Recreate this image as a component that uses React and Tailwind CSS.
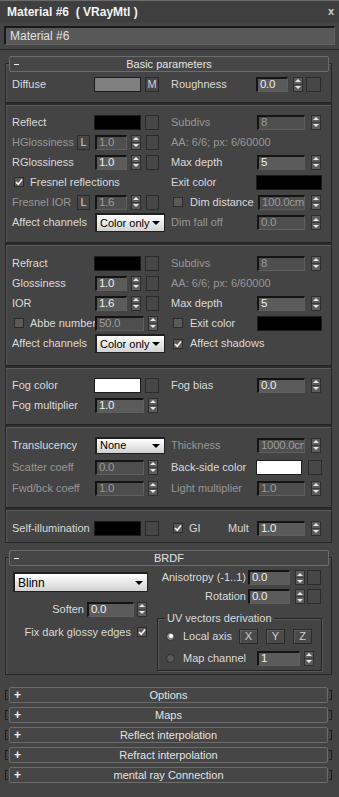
import React from 'react';

const Label = ({ children, dim, className = '' }) => (
    <div className={`shrink-0 whitespace-nowrap leading-none ${dim ? 'text-[#979797]' : 'text-[#dadada]'} ${className}`}>{children}</div>
);

const Swatch = ({ className = '' }) => (
    <div className={`h-[15px] shrink-0 border border-[#1c1c1c] ${className}`} />
);

const MapBox = ({ className = 'w-[14px]', children }) => (
    <div className={`h-[15px] shrink-0 flex items-center justify-center border border-[#2a2a2a] bg-[#474747] text-[#d0d0d0] leading-none ${className}`}>
        {children}
    </div>
);

const Field = ({ value, dim, className = '' }) => (
    <div
        className={`h-[15px] shrink-0 flex items-center pl-[2px] overflow-hidden whitespace-nowrap text-[11.5px] tracking-[-0.3px] leading-none border-t-2 border-l-2 border-b border-r border-t-[#141414] border-l-[#141414] border-b-[#5f5f5f] border-r-[#5f5f5f] ${dim ? 'bg-[#4e4e4e] text-[#9a9a9a]' : 'bg-[#5b5b5b] text-[#eeeeee]'} ${className}`}
    >
        {value}
    </div>
);

const Spinner = ({ className = '' }) => (
    <div className={`w-[10px] h-[15px] shrink-0 flex flex-col bg-[#5c5c5c] border border-[#2e2e2e] ${className}`}>
        <div className="flex-1 flex items-center justify-center border-b border-[#3a3a3a]">
            <div className="w-0 h-0 border-x-[3px] border-x-transparent border-b-[3px] border-b-[#e6e6e6]" />
        </div>
        <div className="flex-1 flex items-center justify-center">
            <div className="w-0 h-0 border-x-[3px] border-x-transparent border-t-[3px] border-t-[#e6e6e6]" />
        </div>
    </div>
);

const Check = ({ checked, className = '' }) => (
    <div className={`w-[10px] h-[10px] shrink-0 flex items-center justify-center bg-[#5a5a5a] border border-[#2c2c2c] ${className}`}>
        {checked && (
            <svg width="8" height="8" viewBox="0 0 8 8">
                <path d="M1 4 L3.2 6.3 L7 1.4" stroke="#f4f4f4" strokeWidth="1.7" fill="none" />
            </svg>
        )}
    </div>
);

const Radio = ({ on }) => (
    <div className={`w-[9px] h-[9px] shrink-0 rounded-full flex items-center justify-center border border-[#2e2e2e] ${on ? 'bg-[#8a8a8a]' : 'bg-[#5a5a5a]'}`}>
        {on && <div className="w-[4px] h-[4px] rounded-full bg-white" />}
    </div>
);

const Dropdown = ({ value, className = '' }) => (
    <div
        className={`shrink-0 flex items-center justify-between pl-[3px] pr-[4px] bg-linear-to-b from-white to-[#d2d2d2] border border-[#202020] border-t-2 border-l-2 text-black text-[11px] leading-none whitespace-nowrap overflow-hidden ${className}`}
    >
        <span className="whitespace-nowrap">{value}</span>
        <div className="shrink-0 w-0 h-0 border-x-[4px] border-x-transparent border-t-[4px] border-t-black" />
    </div>
);

const Btn = ({ children, className = '' }) => (
    <div className={`w-[19px] h-[15px] shrink-0 flex items-center justify-center border border-[#2a2a2a] bg-[#4a4a4a] text-[#cfcfcf] leading-none shadow-[inset_1px_1px_0_#5e5e5e] ${className}`}>
        {children}
    </div>
);

const Sep = ({ className = '' }) => (
    <div className={`h-[4px] border-t border-b border-t-[#232323] border-b-[#5c5c5c] bg-[#2c2c2c] ${className}`} />
);

const Row = ({ children, className = 'h-[20px]' }) => <div className={`flex items-center ${className}`}>{children}</div>;

const Left = ({ children }) => <div className="w-[159px] shrink-0 flex items-center">{children}</div>;

const OpenHeader = ({ title }) => (
    <div className="relative z-10 h-[16px] w-[320px] ml-[9px] flex items-center border border-[#6c6c6c] rounded-[2px] bg-[#464646] text-[#e4e4e4]">
        <div className="w-[14px] pl-[4px] flex items-center">
            <div className="w-[5px] h-[1px] bg-[#eeeeee]" />
        </div>
        <div className="flex-1 text-center pr-[14px] leading-none">{title}</div>
    </div>
);

const Collapsed = ({ title, first }) => (
    <div className={`flex items-center h-[16px] ${first ? 'mt-[12px]' : 'mt-[4px]'}`}>
        <div className="ml-[5px] w-[3px] h-[10px] border-l border-y border-[#1c1c1c]" />
        <div className="ml-[1px] w-[319px] h-[16px] flex items-center border border-[#6c6c6c] rounded-[2px] bg-[#464646] text-[#e4e4e4]">
            <div className="w-[14px] pl-[4px] font-bold text-[12px] leading-none text-[#f0f0f0]">+</div>
            <div className="flex-1 text-center pr-[14px] leading-none">{title}</div>
        </div>
        <div className="ml-[1px] w-[3px] h-[10px] border-r border-y border-[#1c1c1c]" />
    </div>
);

const frame = 'relative -mt-[9px] ml-[5px] w-[327px] border border-[#262626] shadow-[inset_1px_1px_0_#575757]';

export default function App() {
    return (
        <div className="w-[339px] h-[797px] overflow-hidden bg-[#444444] font-['Liberation_Sans',Arial,sans-serif] text-[11px]">
            {/* Title bar */}
            <div className="h-[22px] flex items-center justify-between pl-[7px] pr-[5px] border-t border-[#6a6a6a] bg-[#3f3f3f]">
                <span className="font-bold text-[12px] text-[#f2f2f2] whitespace-pre">Material #6  ( VRayMtl )</span>
                <span className="font-bold text-[11px] text-[#cfcfcf]">x</span>
            </div>

            {/* Name field */}
            <div className="mt-[4px] ml-[4px] w-[331px] h-[19px] flex items-center pl-[4px] text-[12px] text-[#e2e2e2] bg-[#585858] border-t-2 border-l-2 border-b border-r border-t-[#1a1a1a] border-l-[#1a1a1a] border-b-[#626262] border-r-[#626262]">
                Material #6
            </div>
            <div className="mt-[4px] border-t border-[#262626]" />

            <div className="pt-[6px]">
                {/* Basic parameters */}
                <OpenHeader title="Basic parameters" />
                <div className={frame}>
                    <div className="pl-[6px] pt-[10px]">
                        <Row>
                            <Left>
                                <Label className="w-[82px]">Diffuse</Label>
                                <Swatch className="w-[47px] bg-[#808080]" />
                                <MapBox className="w-[14px] ml-[4px]">M</MapBox>
                            </Left>
                            <Label className="w-[85px]">Roughness</Label>
                            <Field value="0.0" className="w-[32px]" />
                            <Spinner className="ml-[5px]" />
                            <MapBox className="w-[15px] ml-[3px]" />
                        </Row>
                    </div>
                    <Sep className="mt-[8px]" />

                    {/* Reflection */}
                    <div className="pl-[6px] pt-[6px]">
                        <Row>
                            <Left>
                                <Label className="w-[82px]">Reflect</Label>
                                <Swatch className="w-[47px] bg-black" />
                                <MapBox className="w-[14px] ml-[4px]" />
                            </Left>
                            <Label dim className="w-[86px]">Subdivs</Label>
                            <Field dim value="8" className="w-[48px]" />
                            <Spinner className="ml-[6px]" />
                        </Row>
                        <Row>
                            <Left>
                                <Label dim className="w-[65px]">HGlossiness</Label>
                                <MapBox className="w-[13px]">L</MapBox>
                                <Field dim value="1.0" className="w-[32px] ml-[5px]" />
                                <Spinner className="ml-[4px]" />
                                <MapBox className="w-[13px] ml-[5px]" />
                            </Left>
                            <Label dim>AA: 6/6; px: 6/60000</Label>
                        </Row>
                        <Row>
                            <Left>
                                <Label className="w-[83px]">RGlossiness</Label>
                                <Field value="1.0" className="w-[32px]" />
                                <Spinner className="ml-[4px]" />
                                <MapBox className="w-[13px] ml-[5px]" />
                            </Left>
                            <Label className="w-[86px]">Max depth</Label>
                            <Field value="5" className="w-[48px]" />
                            <Spinner className="ml-[6px]" />
                        </Row>
                        <Row>
                            <Left>
                                <Check checked className="ml-[2px]" />
                                <Label className="ml-[6px]">Fresnel reflections</Label>
                            </Left>
                            <Label className="w-[85px]">Exit color</Label>
                            <Swatch className="w-[66px] bg-black" />
                        </Row>
                        <Row>
                            <Left>
                                <Label dim className="w-[65px]">Fresnel IOR</Label>
                                <MapBox className="w-[13px]">L</MapBox>
                                <Field dim value="1.6" className="w-[32px] ml-[5px]" />
                                <Spinner className="ml-[4px]" />
                                <MapBox className="w-[13px] ml-[5px]" />
                            </Left>
                            <Check className="ml-[2px]" />
                            <Label className="ml-[7px] w-[68px]">Dim distance</Label>
                            <Field dim value="100.0cm" className="w-[47px]" />
                            <Spinner className="ml-[6px]" />
                        </Row>
                        <Row className="h-[21px]">
                            <Left>
                                <Label className="w-[83px]">Affect channels</Label>
                                <Dropdown value="Color only" className="w-[70px] h-[19px]" />
                            </Left>
                            <Label dim className="w-[86px]">Dim fall off</Label>
                            <Field dim value="0.0" className="w-[48px]" />
                            <Spinner className="ml-[6px]" />
                        </Row>
                    </div>
                    <Sep className="mt-[9px]" />

                    {/* Refraction */}
                    <div className="pl-[6px] pt-[7px]">
                        <Row>
                            <Left>
                                <Label className="w-[82px]">Refract</Label>
                                <Swatch className="w-[47px] bg-black" />
                                <MapBox className="w-[14px] ml-[4px]" />
                            </Left>
                            <Label dim className="w-[86px]">Subdivs</Label>
                            <Field dim value="8" className="w-[48px]" />
                            <Spinner className="ml-[6px]" />
                        </Row>
                        <Row>
                            <Left>
                                <Label className="w-[83px]">Glossiness</Label>
                                <Field value="1.0" className="w-[32px]" />
                                <Spinner className="ml-[4px]" />
                                <MapBox className="w-[13px] ml-[5px]" />
                            </Left>
                            <Label dim>AA: 6/6; px: 6/60000</Label>
                        </Row>
                        <Row>
                            <Left>
                                <Label className="w-[83px]">IOR</Label>
                                <Field value="1.6" className="w-[32px]" />
                                <Spinner className="ml-[4px]" />
                                <MapBox className="w-[13px] ml-[5px]" />
                            </Left>
                            <Label className="w-[86px]">Max depth</Label>
                            <Field value="5" className="w-[48px]" />
                            <Spinner className="ml-[6px]" />
                        </Row>
                        <Row>
                            <Left>
                                <Check className="ml-[2px]" />
                                <Label className="ml-[6px] w-[65px]">Abbe number</Label>
                                <Field dim value="50.0" className="w-[49px]" />
                                <Spinner className="ml-[4px]" />
                            </Left>
                            <Check className="ml-[2px]" />
                            <Label className="ml-[7px] w-[67px]">Exit color</Label>
                            <Swatch className="w-[65px] bg-black" />
                        </Row>
                        <Row className="h-[21px]">
                            <Left>
                                <Label className="w-[83px]">Affect channels</Label>
                                <Dropdown value="Color only" className="w-[70px] h-[19px]" />
                            </Left>
                            <Check checked className="ml-[2px]" />
                            <Label className="ml-[7px]">Affect shadows</Label>
                        </Row>
                    </div>
                    <Sep className="mt-[11px]" />

                    {/* Fog */}
                    <div className="pl-[6px] pt-[6px]">
                        <Row>
                            <Left>
                                <Label className="w-[82px]">Fog color</Label>
                                <Swatch className="w-[47px] bg-white" />
                                <MapBox className="w-[14px] ml-[4px]" />
                            </Left>
                            <Label className="w-[86px]">Fog bias</Label>
                            <Field value="0.0" className="w-[48px]" />
                            <Spinner className="ml-[6px]" />
                        </Row>
                        <Row>
                            <Left>
                                <Label className="w-[83px]">Fog multiplier</Label>
                                <Field value="1.0" className="w-[49px]" />
                                <Spinner className="ml-[4px]" />
                            </Left>
                        </Row>
                    </div>
                    <Sep className="mt-[9px]" />

                    {/* Translucency */}
                    <div className="pl-[6px] pt-[6px]">
                        <Row className="h-[22px]">
                            <Left>
                                <Label className="w-[83px]">Translucency</Label>
                                <Dropdown value="None" className="w-[70px] h-[17px]" />
                            </Left>
                            <Label dim className="w-[86px]">Thickness</Label>
                            <Field dim value="1000.0cm" className="w-[48px]" />
                            <Spinner className="ml-[6px]" />
                        </Row>
                        <Row className="h-[22px]">
                            <Left>
                                <Label dim className="w-[83px]">Scatter coeff</Label>
                                <Field dim value="0.0" className="w-[49px]" />
                                <Spinner className="ml-[4px]" />
                            </Left>
                            <Label className="w-[85px]">Back-side color</Label>
                            <Swatch className="w-[46px] bg-white" />
                            <MapBox className="w-[14px] ml-[6px]" />
                        </Row>
                        <Row>
                            <Left>
                                <Label dim className="w-[83px]">Fwd/bck coeff</Label>
                                <Field dim value="1.0" className="w-[49px]" />
                                <Spinner className="ml-[4px]" />
                            </Left>
                            <Label dim className="w-[86px]">Light multiplier</Label>
                            <Field dim value="1.0" className="w-[48px]" />
                            <Spinner className="ml-[6px]" />
                        </Row>
                    </div>
                    <Sep className="mt-[9px]" />

                    {/* Self-illumination */}
                    <div className="pl-[6px] pt-[7px] pb-[4px]">
                        <Row>
                            <Left>
                                <Label className="w-[82px]">Self-illumination</Label>
                                <Swatch className="w-[47px] bg-black" />
                                <MapBox className="w-[14px] ml-[4px]" />
                            </Left>
                            <Check checked className="ml-[2px]" />
                            <Label className="ml-[6px] w-[39px]">GI</Label>
                            <Label className="w-[29px]">Mult</Label>
                            <Field value="1.0" className="w-[48px]" />
                            <Spinner className="ml-[6px]" />
                        </Row>
                    </div>
                </div>

                {/* BRDF */}
                <div className="mt-[7px]">
                    <OpenHeader title="BRDF" />
                </div>
                <div className={frame}>
                    <div className="flex pl-[7px] pb-[3px]">
                        <div className="w-[135px] shrink-0">
                            <Dropdown value="Blinn" className="mt-[14px] w-[135px] h-[20px] text-[12px]" />
                            <Row className="h-[20px] mt-[7px] justify-end pr-[1px]">
                                <Label>Soften</Label>
                                <Field value="0.0" className="w-[47px] ml-[3px]" />
                                <Spinner className="ml-[3px]" />
                            </Row>
                            <Row className="h-[20px] mt-[3px] justify-end pr-[1px]">
                                <Label>Fix dark glossy edges</Label>
                                <Check checked className="ml-[6px]" />
                            </Row>
                        </div>
                        <div className="ml-[9px] w-[165px] shrink-0 pt-[10px]">
                            <Row className="h-[19px]">
                                <Label className="w-[89px] text-right">Anisotropy (-1..1)</Label>
                                <Field value="0.0" className="w-[42px] ml-[2px]" />
                                <Spinner className="ml-[5px]" />
                                <MapBox className="w-[14px] ml-[2px]" />
                            </Row>
                            <Row className="h-[19px]">
                                <Label className="w-[89px] text-right">Rotation</Label>
                                <Field value="0.0" className="w-[42px] ml-[2px]" />
                                <Spinner className="ml-[5px]" />
                                <MapBox className="w-[14px] ml-[2px]" />
                            </Row>
                            <div className="mt-[12px] pb-[3px] border border-[#242424] shadow-[inset_1px_1px_0_#585858,1px_1px_0_#585858]">
                                <div className="-mt-[7px] ml-[7px] w-fit px-[2px] bg-[#444444] leading-[12px] text-[#dadada] whitespace-nowrap">
                                    UV vectors derivation
                                </div>
                                <Row className="h-[18px] mt-[3px] pl-[8px]">
                                    <Radio on />
                                    <Label className="ml-[8px] w-[56px]">Local axis</Label>
                                    <Btn>X</Btn>
                                    <Btn className="ml-[8px]">Y</Btn>
                                    <Btn className="ml-[8px]">Z</Btn>
                                </Row>
                                <Row className="h-[18px] mt-[4px] pl-[8px]">
                                    <Radio />
                                    <Label className="ml-[8px] w-[74px]">Map channel</Label>
                                    <Field value="1" className="w-[43px]" />
                                    <Spinner className="ml-[4px]" />
                                </Row>
                            </div>
                        </div>
                    </div>
                </div>

                {/* Collapsed rollouts */}
                <Collapsed first title="Options" />
                <Collapsed title="Maps" />
                <Collapsed title="Reflect interpolation" />
                <Collapsed title="Refract interpolation" />
                <Collapsed title="mental ray Connection" />
            </div>
        </div>
    );
}
